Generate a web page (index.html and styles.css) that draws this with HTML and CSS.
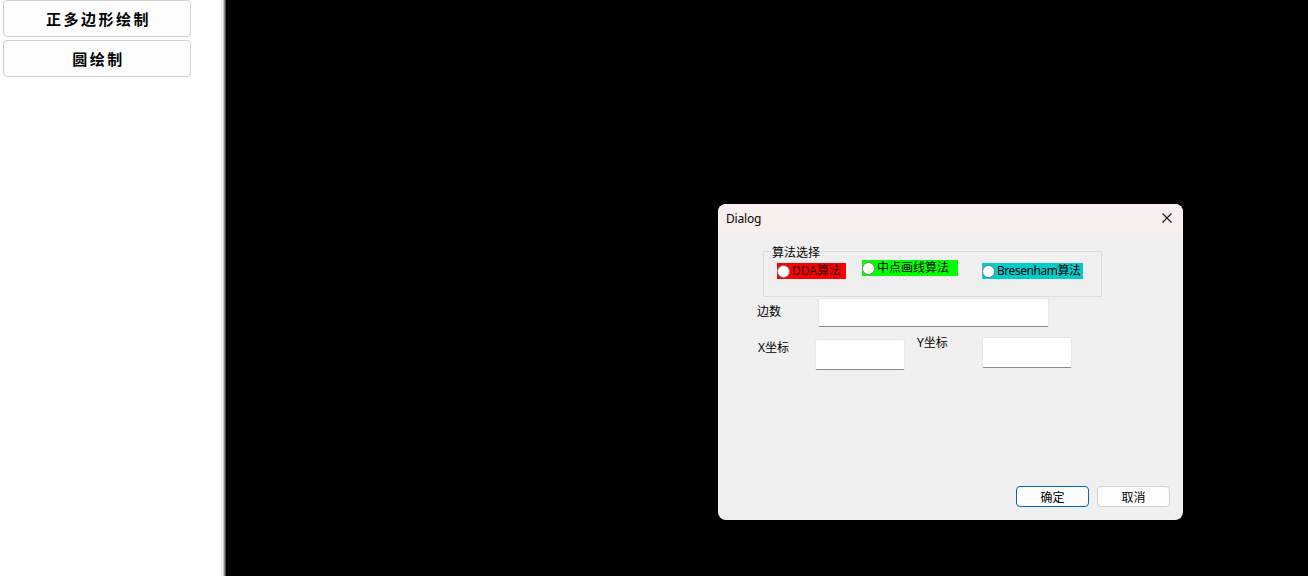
FILE: index.html
```html
<!DOCTYPE html>
<html lang="zh-CN">
<head>
<meta charset="utf-8">
<title>Dialog</title>
<link rel="stylesheet" href="styles.css">
</head>
<body>
<div class="app">
  <aside class="sidebar">
    <button class="side-btn">正多边形绘制</button>
    <button class="side-btn">圆绘制</button>
  </aside>
  <div class="splitter"></div>
  <main class="canvas">
    <section class="dialog">
      <header class="titlebar">
        <span class="title">Dialog</span>
        <svg class="close" width="10" height="10" viewBox="0 0 10 10"><path d="M0.5 0.5L9.5 9.5M9.5 0.5L0.5 9.5" stroke="#1a1a1a" stroke-width="1.1" fill="none"/></svg>
      </header>
      <div class="dialog-body">
        <div class="group">
          <span class="group-title">算法选择</span>
          <label class="radio radio-dda"><span class="dot"></span><span class="rtext">DDA算法</span></label>
          <label class="radio radio-mid"><span class="dot"></span><span class="rtext">中点画线算法</span></label>
          <label class="radio radio-bre"><span class="dot"></span><span class="rtext">Bresenham算法</span></label>
        </div>
        <div class="row-sides">
          <span class="lbl lbl-sides">边数</span>
          <span class="field field-sides"></span>
        </div>
        <div class="row-xy">
          <span class="lbl lbl-x">X坐标</span>
          <span class="field field-x"></span>
          <span class="lbl lbl-y">Y坐标</span>
          <span class="field field-y"></span>
        </div>
        <div class="actions">
          <button class="dbtn dbtn-ok">确定</button>
          <button class="dbtn">取消</button>
        </div>
      </div>
    </section>
  </main>
</div>
</body>
</html>
```

FILE: styles.css
```css
html, body {
  margin: 0;
  padding: 0;
  height: 100%;
}
body {
  font-family: "Noto Sans", "Noto Sans CJK SC", sans-serif;
  background: #000;
  overflow: hidden;
}
.app {
  display: flex;
  height: 576px;
}
.sidebar {
  width: 221px;
  background: #fff;
  display: flex;
  flex-direction: column;
  gap: 3px;
  padding: 0 0 0 3px;
  box-sizing: border-box;
}
.side-btn {
  width: 188px;
  height: 37px;
  box-sizing: border-box;
  border: 1px solid #cfcfcf;
  border-radius: 4px;
  background: #fdfdfd;
  font-family: "Noto Sans CJK SC", sans-serif;
  font-weight: 700;
  font-size: 15px;
  letter-spacing: 2.5px;
  color: #000;
  padding: 0 0 0 3px;
  line-height: 35px;
}
.splitter {
  width: 5px;
  background: linear-gradient(to right, #e6e6e6 0, #e6e6e6 1px, #f7f7f7 1px, #f7f7f7 2px, #c4c4c4 2px, #c4c4c4 3px, #8a8a8a 3px, #8a8a8a 4px, #4a4a4a 4px);
}
.canvas {
  flex: 1;
  background: #000;
  position: relative;
}
.dialog {
  position: absolute;
  left: 492px;
  top: 204px;
  width: 465px;
  height: 316px;
  border-radius: 8px;
  overflow: hidden;
  background: #f0f0f0;
  display: flex;
  flex-direction: column;
  font-size: 12px;
  color: #000;
}
.titlebar {
  height: 28px;
  flex: none;
  background: #f9efef;
  display: flex;
  align-items: center;
  justify-content: space-between;
  padding: 0 11px 0 8px;
}
.title {
  font-family: "Noto Sans", sans-serif;
  font-size: 12px;
  letter-spacing: -0.2px;
  line-height: 16px;
  margin-top: 1px;
}
.close {
  display: block;
}
.dialog-body {
  flex: 1;
  display: flex;
  flex-direction: column;
  padding: 19px 0 13px 0;
}
.group {
  position: relative;
  margin-left: 45px;
  width: 339px;
  height: 46px;
  box-sizing: border-box;
  border: 1px solid #dcdcdc;
  display: flex;
  align-items: flex-start;
  padding: 8px 0 0 13px;
}
.group-title {
  position: absolute;
  top: -8px;
  left: 7px;
  background: #f0f0f0;
  padding: 0 1px;
  font-family: "Noto Sans CJK SC", sans-serif;
  font-size: 12px;
  line-height: 15px;
}
.radio {
  display: flex;
  align-items: center;
  height: 16px;
  box-sizing: border-box;
  font-family: "Noto Sans", "Noto Sans CJK SC", sans-serif;
  font-size: 12px;
  line-height: 16px;
  white-space: nowrap;
  overflow: hidden;
}
.radio-dda {
  width: 69px;
  background: #ff0000;
  margin-top: 3px;
}
.radio-mid {
  width: 96px;
  background: #00ff00;
  margin-left: 16px;
}
.radio-bre {
  width: 101px;
  background: #00cccc;
  margin-left: 24px;
  margin-top: 3px;
}
.radio-bre .rtext {
  letter-spacing: -0.45px;
}
.dot {
  width: 13px;
  height: 13px;
  box-sizing: border-box;
  border-radius: 50%;
  background: #fff;
  border: 1px solid #7a7a7a;
  flex: none;
  margin-right: 2px;
}
.radio-dda .rtext { color: #1a0000; }
.row-sides {
  display: flex;
  align-items: center;
  margin-left: 39px;
  margin-top: 1px;
}
.lbl {
  font-family: "Noto Sans", "Noto Sans CJK SC", sans-serif;
  font-size: 12px;
  line-height: 16px;
  white-space: nowrap;
}
.lbl-sides {
  width: 61px;
  margin-top: -2px;
}
.field {
  display: block;
  background: #fff;
  box-sizing: border-box;
  border: 1px solid #e8e8e8;
  border-bottom: 1px solid #8a8a8a;
  border-radius: 2px;
}
.field-sides {
  width: 231px;
  height: 29px;
}
.row-xy {
  display: flex;
  align-items: flex-start;
  margin-left: 40px;
  margin-top: 8px;
}
.lbl-x {
  width: 57px;
  margin-top: 5px;
}
.field-x {
  width: 90px;
  height: 31px;
  margin-top: 4px;
}
.lbl-y {
  width: 65px;
  margin-left: 12px;
  margin-top: 0;
}
.field-y {
  width: 90px;
  height: 31px;
  margin-top: 2px;
}
.actions {
  margin-top: auto;
  display: flex;
  justify-content: flex-end;
  gap: 8px;
  padding-right: 13px;
}
.dbtn {
  width: 73px;
  height: 21px;
  box-sizing: border-box;
  border: 1px solid #d0d0d0;
  border-radius: 4px;
  background: #fdfdfd;
  font-family: "Noto Sans CJK SC", sans-serif;
  font-size: 12px;
  line-height: 17px;
  padding: 0;
  color: #000;
}
.dbtn-ok {
  border-color: #0067c0;
}
```
